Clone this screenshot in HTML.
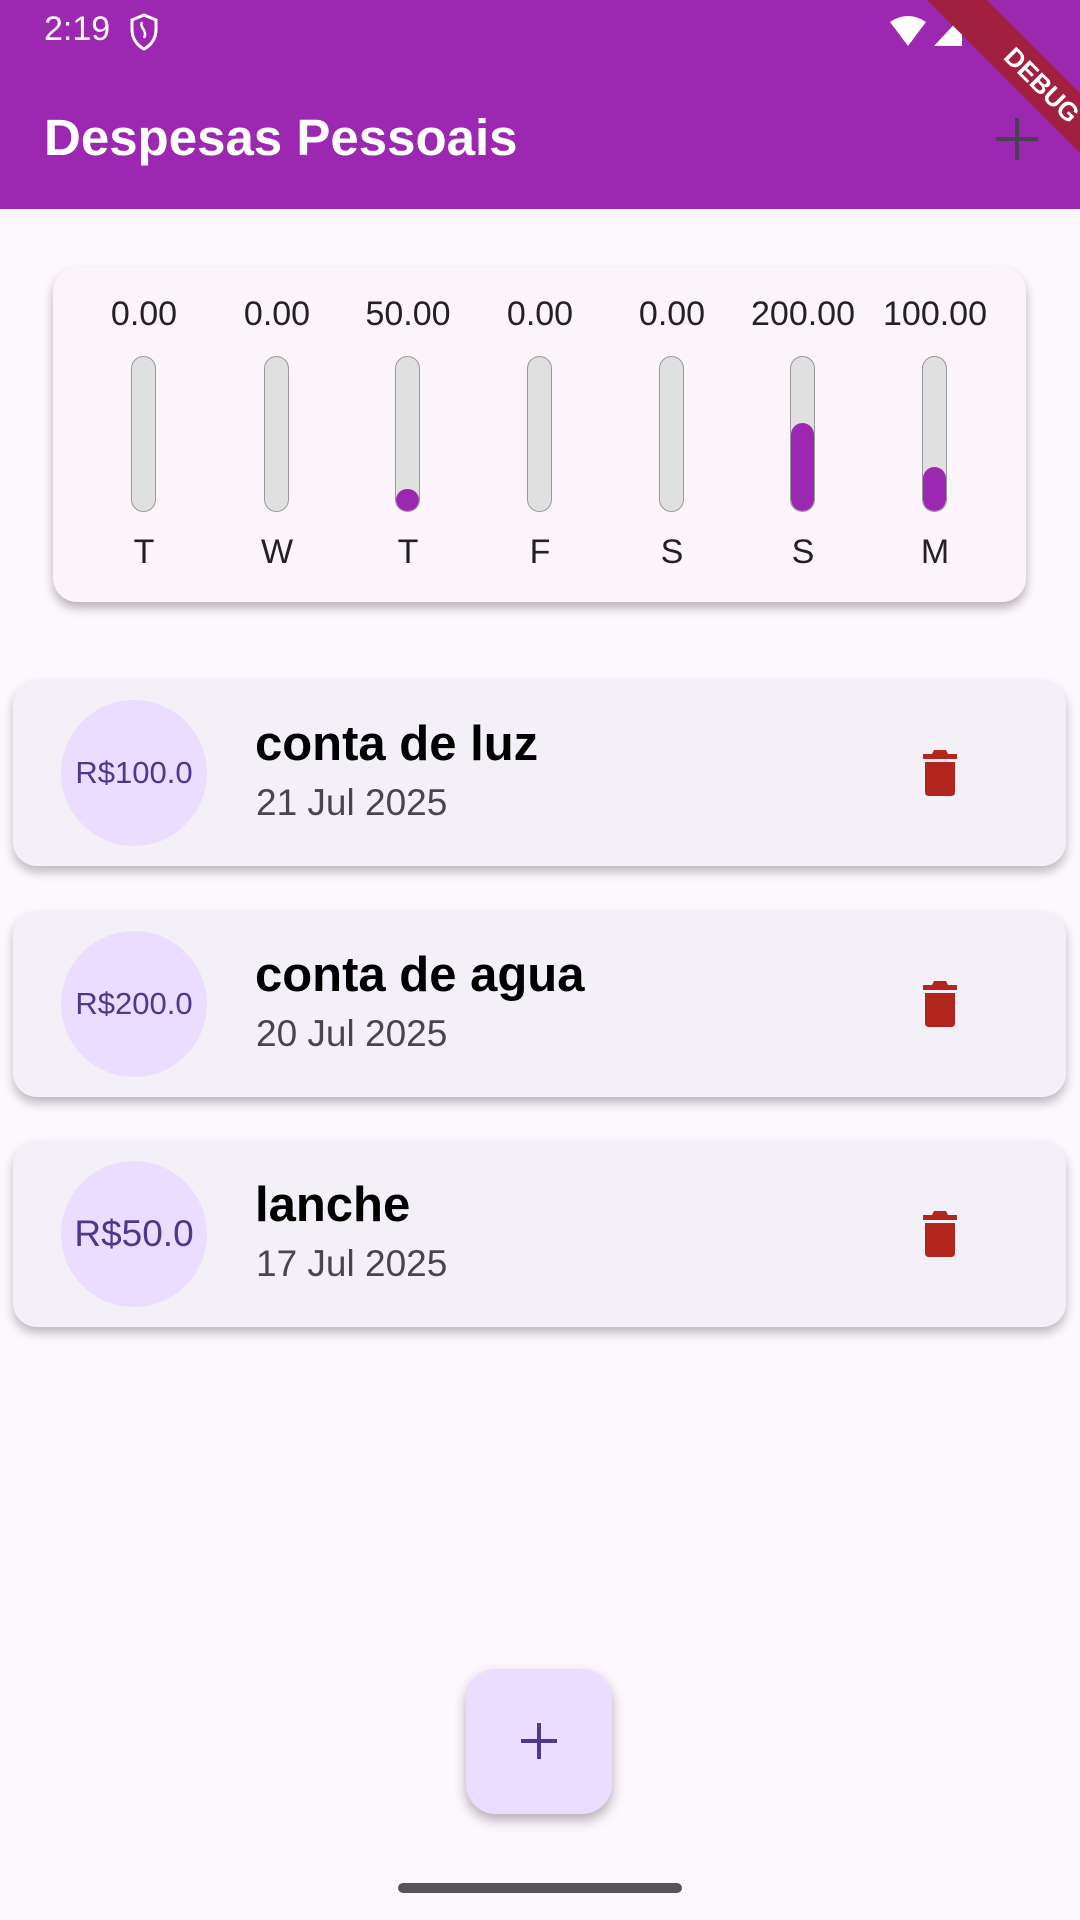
<!DOCTYPE html><html><head><style>
body{margin:0;width:1080px;height:1920px;background:#fdf7fe;font-family:"Liberation Sans",sans-serif;position:relative;overflow:hidden}
.bar{position:absolute;left:0;top:0;width:1080px;height:209px;background:#9c27b0}
.t{position:absolute;left:44px;top:108px;color:#fff;font-weight:bold;font-size:51px}
.card{position:absolute;background:#fbf4fb;border-radius:24px;box-shadow:0 6px 10px rgba(0,0,0,.28)}
.col{position:absolute;width:140px;text-align:center;font-size:34px;color:#222}
.tube{position:absolute;left:57px;top:61px;width:23px;height:154px;border:1.5px solid #999;background:#e0e0e0;border-radius:13px;overflow:hidden}
.fill{position:absolute;left:0;bottom:0;width:100%;background:#9c27b0;border-radius:12px}
.lab{position:absolute;top:238px;width:140px}
.item{position:absolute;left:13px;width:1053px;height:186px;background:#f4f0f7;border-radius:24px;box-shadow:0 6px 10px rgba(0,0,0,.25)}
.circ{position:absolute;left:48px;top:20px;width:146px;height:146px;border-radius:50%;background:#eaddff;color:#4f378b;font-size:31px;line-height:146px;text-align:center}
.nm{position:absolute;left:242px;top:36px;font-weight:bold;font-size:49px;color:#000}
.dt{position:absolute;left:243px;top:102px;font-size:37px;color:#49454f}
.tr{position:absolute;left:908px;top:68px}
</style></head><body>
<div class="bar"></div>
<div style="position:absolute;left:44px;top:10px;color:#fff;font-size:34px">2:19</div>
<svg style="position:absolute;left:128px;top:12px" width="32" height="40" viewBox="0 0 32 40"><path d="M16 3L4 8v10c0 9 6 16 12 19 6-3 12-10 12-19V8z" fill="none" stroke="#fff" stroke-width="3"/><path d="M14 10c-3 6 6 8 2 16" fill="none" stroke="#fff" stroke-width="2.5"/></svg>
<svg style="position:absolute;left:888px;top:14px" width="80" height="34"><path d="M2 8Q20 -4 38 8L20 32z" fill="#fff"/><path d="M46 32L74 2v30z" fill="#fff"/></svg>
<div style="position:absolute;left:872px;top:64px;width:340px;height:42px;background:#a0203e;color:#fff;font-weight:bold;font-size:26px;text-align:center;line-height:42px;transform:rotate(45deg);transform-origin:center">DEBUG</div>
<div class="t">Despesas Pessoais</div>
<svg style="position:absolute;left:994px;top:116px" width="46" height="46"><path d="M23 2v42M2 23h42" stroke="#4a3f55" stroke-width="4"/></svg>
<div class="card" style="left:53px;top:267px;width:973px;height:335px"></div>
<div class="col" style="left:74px;top:295px">0.00<div class="tube"></div><div class="lab">T</div></div>
<div class="col" style="left:207px;top:295px">0.00<div class="tube"></div><div class="lab">W</div></div>
<div class="col" style="left:338px;top:295px">50.00<div class="tube"><div class="fill" style="height:22px"></div></div><div class="lab">T</div></div>
<div class="col" style="left:470px;top:295px">0.00<div class="tube"></div><div class="lab">F</div></div>
<div class="col" style="left:602px;top:295px">0.00<div class="tube"></div><div class="lab">S</div></div>
<div class="col" style="left:733px;top:295px">200.00<div class="tube"><div class="fill" style="height:88px"></div></div><div class="lab">S</div></div>
<div class="col" style="left:865px;top:295px">100.00<div class="tube"><div class="fill" style="height:44px"></div></div><div class="lab">M</div></div>

<div class="item" style="top:680px"><div class="circ">R$100.0</div><div class="nm">conta de luz</div><div class="dt">21 Jul 2025</div><svg class="tr" width="38" height="50" viewBox="0 0 38 50"><path d="M13 2h12l2 4h9v5H2V6h9z" fill="#b3261e"/><path d="M4 14h30v30q0 4-4 4H8q-4 0-4-4z" fill="#b3261e"/></svg></div>
<div class="item" style="top:911px"><div class="circ">R$200.0</div><div class="nm">conta de agua</div><div class="dt">20 Jul 2025</div><svg class="tr" width="38" height="50" viewBox="0 0 38 50"><path d="M13 2h12l2 4h9v5H2V6h9z" fill="#b3261e"/><path d="M4 14h30v30q0 4-4 4H8q-4 0-4-4z" fill="#b3261e"/></svg></div>
<div class="item" style="top:1141px"><div class="circ" style="font-size:37px">R$50.0</div><div class="nm">lanche</div><div class="dt">17 Jul 2025</div><svg class="tr" width="38" height="50" viewBox="0 0 38 50"><path d="M13 2h12l2 4h9v5H2V6h9z" fill="#b3261e"/><path d="M4 14h30v30q0 4-4 4H8q-4 0-4-4z" fill="#b3261e"/></svg></div>

<div style="position:absolute;left:466px;top:1669px;width:146px;height:145px;border-radius:30px;background:#eaddff;box-shadow:0 6px 12px rgba(0,0,0,.3)"><svg style="position:absolute;left:53px;top:52px" width="40" height="40"><path d="M20 2v36M2 20h36" stroke="#4f378b" stroke-width="4"/></svg></div>
<div style="position:absolute;left:398px;top:1883px;width:284px;height:10px;border-radius:5px;background:#555"></div>
</body></html>
